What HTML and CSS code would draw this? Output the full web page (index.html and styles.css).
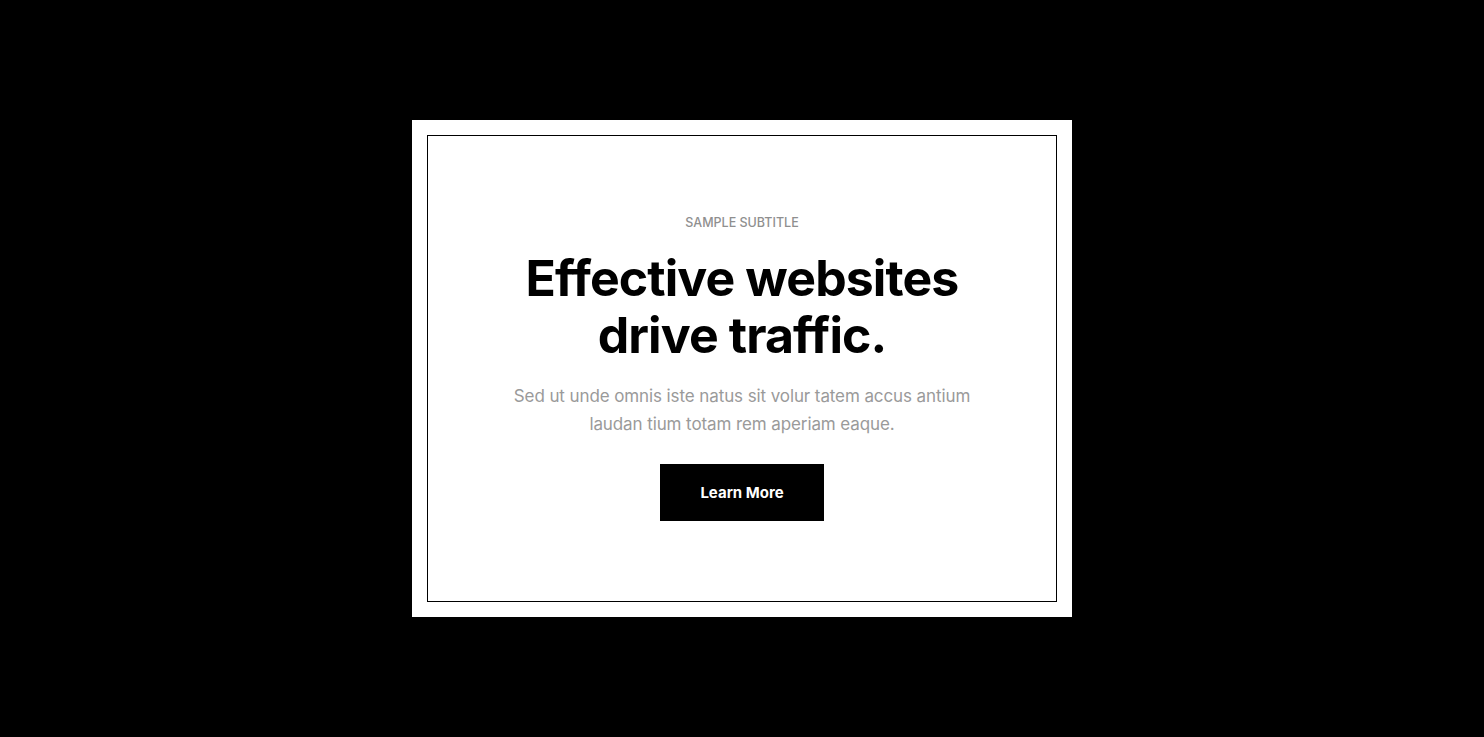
FILE: index.html
```html
<!DOCTYPE html>
<html lang="en">
<head>
<meta charset="utf-8">
<title>Effective websites</title>
<link rel="stylesheet" href="styles.css">
</head>
<body>
<main class="stage">
  <section class="card">
    <div class="frame">
      <p class="subtitle">SAMPLE SUBTITLE</p>
      <h1 class="title">Effective websites<br>drive traffic.</h1>
      <p class="text">Sed ut unde omnis iste natus sit volur tatem accus antium laudan tium totam rem aperiam eaque.</p>
      <a class="button" href="#">Learn More</a>
    </div>
  </section>
</main>
</body>
</html>
```

FILE: styles.css
```css
* { box-sizing: border-box; }
html, body { margin: 0; padding: 0; background: #000; }
body { font-family: Inter, "Noto Sans", sans-serif; }
.stage {
  width: 1484px;
  height: 737px;
  display: flex;
  align-items: center;
  justify-content: center;
}
.card {
  width: 660px;
  height: 497px;
  background: #fff;
  padding: 15px;
}
.frame {
  width: 100%;
  height: 100%;
  border: 1px solid #000;
  display: flex;
  flex-direction: column;
  align-items: center;
  justify-content: center;
  text-align: center;
  padding-bottom: 1px;
}
.subtitle {
  margin: 0 0 19px;
  font-size: 12.5px;
  font-weight: 500;
  color: #8f8f8f;
  line-height: 16px;
  letter-spacing: 0;
}
.title {
  margin: 0 0 18px;
  font-size: 50px;
  line-height: 57px;
  font-weight: 700;
  color: #000;
  letter-spacing: -0.9px;
}
.text {
  margin: 0 0 26px;
  width: 480px;
  font-size: 17px;
  line-height: 28px;
  color: #9a9a9a;
  letter-spacing: -0.1px;
}
.button {
  display: flex;
  align-items: center;
  justify-content: center;
  width: 164px;
  height: 57px;
  background: #000;
  color: #fff;
  font-size: 15px;
  font-weight: 700;
  text-decoration: none;
  letter-spacing: 0;
}
```
